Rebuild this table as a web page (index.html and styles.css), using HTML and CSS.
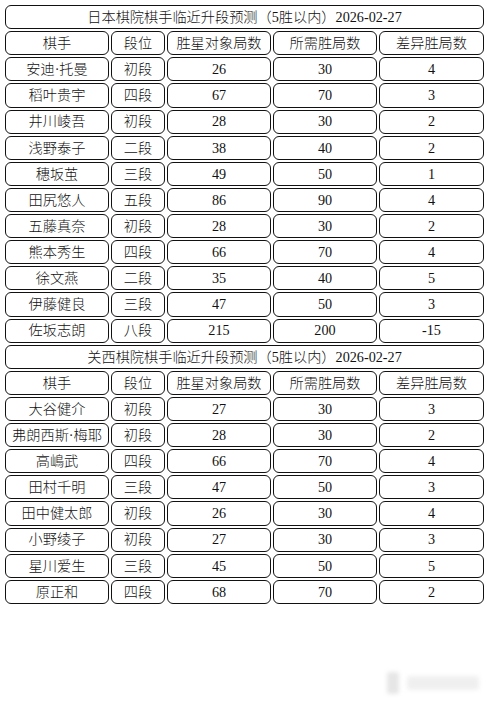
FILE: index.html
```html
<!DOCTYPE html>
<html lang="zh">
<head>
<meta charset="utf-8">
<link rel="stylesheet" href="styles.css">
</head>
<body>
<div class="sheet">
  <div class="title">日本棋院棋手临近升段预测（5胜以内）2026-02-27</div>
  <div class="c">棋手</div><div class="c">段位</div><div class="c">胜星对象局数</div><div class="c">所需胜局数</div><div class="c">差异胜局数</div>
  <div class="c">安迪·托曼</div><div class="c">初段</div><div class="c">26</div><div class="c">30</div><div class="c">4</div>
  <div class="c">稻叶贵宇</div><div class="c">四段</div><div class="c">67</div><div class="c">70</div><div class="c">3</div>
  <div class="c">井川崚吾</div><div class="c">初段</div><div class="c">28</div><div class="c">30</div><div class="c">2</div>
  <div class="c">浅野泰子</div><div class="c">二段</div><div class="c">38</div><div class="c">40</div><div class="c">2</div>
  <div class="c">穗坂茧</div><div class="c">三段</div><div class="c">49</div><div class="c">50</div><div class="c">1</div>
  <div class="c">田尻悠人</div><div class="c">五段</div><div class="c">86</div><div class="c">90</div><div class="c">4</div>
  <div class="c">五藤真奈</div><div class="c">初段</div><div class="c">28</div><div class="c">30</div><div class="c">2</div>
  <div class="c">熊本秀生</div><div class="c">四段</div><div class="c">66</div><div class="c">70</div><div class="c">4</div>
  <div class="c">徐文燕</div><div class="c">二段</div><div class="c">35</div><div class="c">40</div><div class="c">5</div>
  <div class="c">伊藤健良</div><div class="c">三段</div><div class="c">47</div><div class="c">50</div><div class="c">3</div>
  <div class="c">佐坂志朗</div><div class="c">八段</div><div class="c">215</div><div class="c">200</div><div class="c">-15</div>
  <div class="title">关西棋院棋手临近升段预测（5胜以内）2026-02-27</div>
  <div class="c">棋手</div><div class="c">段位</div><div class="c">胜星对象局数</div><div class="c">所需胜局数</div><div class="c">差异胜局数</div>
  <div class="c">大谷健介</div><div class="c">初段</div><div class="c">27</div><div class="c">30</div><div class="c">3</div>
  <div class="c">弗朗西斯·梅耶</div><div class="c">初段</div><div class="c">28</div><div class="c">30</div><div class="c">2</div>
  <div class="c">高嶋武</div><div class="c">四段</div><div class="c">66</div><div class="c">70</div><div class="c">4</div>
  <div class="c">田村千明</div><div class="c">三段</div><div class="c">47</div><div class="c">50</div><div class="c">3</div>
  <div class="c">田中健太郎</div><div class="c">初段</div><div class="c">26</div><div class="c">30</div><div class="c">4</div>
  <div class="c">小野绫子</div><div class="c">初段</div><div class="c">27</div><div class="c">30</div><div class="c">3</div>
  <div class="c">星川爱生</div><div class="c">三段</div><div class="c">45</div><div class="c">50</div><div class="c">5</div>
  <div class="c">原正和</div><div class="c">四段</div><div class="c">68</div><div class="c">70</div><div class="c">2</div>
</div>
<div class="watermark"><span class="wm-icon"></span><span class="wm-text"></span></div>
</body>
</html>
```

FILE: styles.css
```css
html, body {
  margin: 0;
  padding: 0;
  background: #ffffff;
}
body {
  width: 487px;
  height: 702px;
  position: relative;
  overflow: hidden;
  font-family: "Liberation Serif", "Noto Sans CJK SC", serif;
  font-size: 14.2px;
  font-weight: 300;
  color: #111;
}
.sheet {
  display: grid;
  grid-template-columns: 104px 54px 104px 104px 105px;
  grid-auto-rows: 24.14px;
  column-gap: 2px;
  row-gap: 2px;
  padding: 5px 0 0 5px;
}
.c, .title {
  box-sizing: border-box;
  border: 1px solid #111;
  border-radius: 6px;
  display: flex;
  align-items: center;
  justify-content: center;
  white-space: nowrap;
  line-height: 1;
}
.title {
  grid-column: 1 / span 5;
}
.watermark {
  position: absolute;
  left: 387px;
  top: 672px;
  display: flex;
  align-items: center;
  gap: 8px;
  filter: blur(2px);
  opacity: 0.6;
}
.wm-icon {
  width: 12px;
  height: 22px;
  background: #d6d6d6;
  border-radius: 3px;
}
.wm-text {
  width: 72px;
  height: 14px;
  background: #e6e6e6;
  border-radius: 3px;
}
```
